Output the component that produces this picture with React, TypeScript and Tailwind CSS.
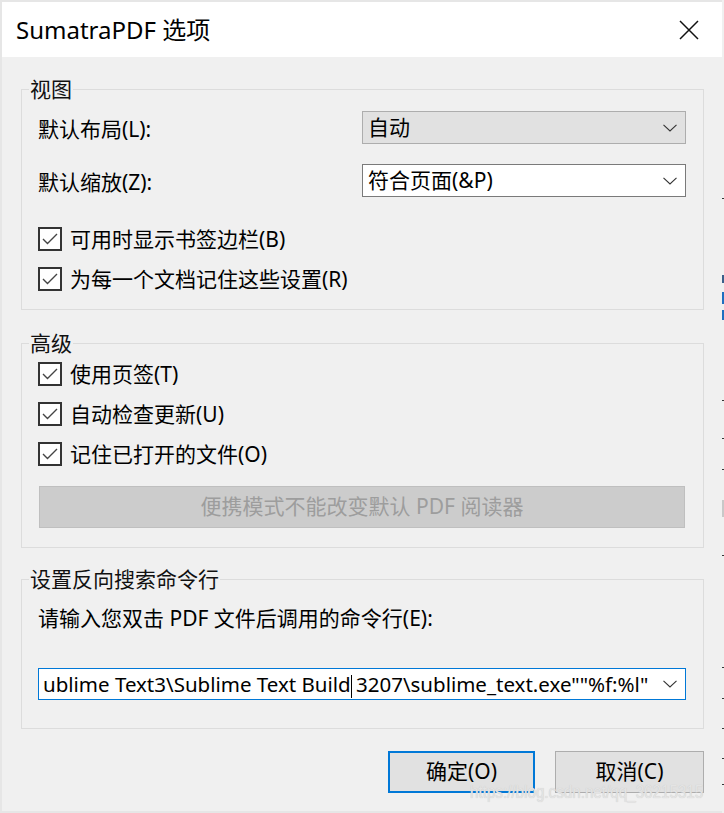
import React from "react";

const font = "font-['Noto_Sans','Noto_Sans_CJK_SC',sans-serif]";

function Chevron() {
  return (
    <svg width="14" height="8" viewBox="0 0 14 8" className="shrink-0">
      <polyline points="0.5,0.8 7,7 13.5,0.8" fill="none" stroke="#333" strokeWidth="1.1" />
    </svg>
  );
}

function Check({ label }: { label: string }) {
  return (
    <div className="flex items-center h-[24px]">
      <div className="w-[24px] h-[24px] border-2 border-[#333] bg-white flex items-center justify-center shrink-0">
        <svg width="20" height="20" viewBox="0 0 20 20">
          <polyline points="3,10 7.5,14.5 17,5" fill="none" stroke="#444" strokeWidth="1.4" />
        </svg>
      </div>
      <span className="ml-[8px] text-[21px] leading-[24px] text-black whitespace-nowrap">{label}</span>
    </div>
  );
}

function Group({ title, h, children }: { title: string; h: string; children: React.ReactNode }) {
  return (
    <fieldset className={`border border-[#dcdcdc] w-[683px] ${h} px-0 py-0 m-0`}>
      <legend className="ml-[7px] px-[1px] text-[21px] leading-[20px] text-[#111]">{title}</legend>
      <div className="pl-[16px] pr-[17px]">{children}</div>
    </fieldset>
  );
}

export default function App() {
  return (
    <div className={`${font} w-[724px] h-[813px] bg-[#e6e6e6] relative overflow-hidden`}>
      <div className="absolute left-[2px] top-[2px] w-[720px] h-[809px] flex flex-col">
        {/* title bar */}
        <div className="h-[55px] bg-white flex items-center pl-[14px] pr-[23px]">
          <span className="text-[24px] text-black flex-1">SumatraPDF 选项</span>
          <svg width="20" height="20" viewBox="0 0 20 20">
            <path d="M1 1 L19 19 M19 1 L1 19" stroke="#111" strokeWidth="1.5" />
          </svg>
        </div>

        <div className="flex-1 bg-[#f0f0f0] pl-[19px] flex flex-col">
          {/* 视图 */}
          <div className="mt-[22px]">
            <Group title="视图" h="h-[231px]">
              <div className="mt-[12px] flex items-center h-[33px]">
                <span className="flex-1 text-[21px] mt-[5px] text-black">默认布局(L):</span>
                <div className="w-[324px] h-[33px] bg-[#e1e1e1] border border-[#adadad] flex items-center pl-[5px] pr-[8px]">
                  <span className="flex-1 text-[21px] text-black">自动</span>
                  <Chevron />
                </div>
              </div>
              <div className="mt-[20px] flex items-center h-[33px]">
                <span className="flex-1 text-[21px] mt-[5px] text-black">默认缩放(Z):</span>
                <div className="w-[324px] h-[33px] bg-white border border-[#7a7a7a] flex items-center pl-[5px] pr-[8px]">
                  <span className="flex-1 text-[21px] text-black">符合页面(&amp;P)</span>
                  <Chevron />
                </div>
              </div>
              <div className="mt-[30px] flex flex-col gap-[16px]">
                <Check label="可用时显示书签边栏(B)" />
                <Check label="为每一个文档记住这些设置(R)" />
              </div>
            </Group>
          </div>

          {/* 高级 */}
          <div className="mt-[23px]">
            <Group title="高级" h="h-[215px]">
              <div className="mt-[9px] flex flex-col gap-[16px]">
                <Check label="使用页签(T)" />
                <Check label="自动检查更新(U)" />
                <Check label="记住已打开的文件(O)" />
              </div>
              <div className="mt-[20px] ml-px w-[646px] h-[42px] bg-[#cccccc] border border-[#bfbfbf] flex items-center justify-center text-[21px] text-[#9d9d9d]">
                便携模式不能改变默认 PDF 阅读器
              </div>
            </Group>
          </div>

          {/* 设置反向搜索命令行 */}
          <div className="mt-[21px]">
            <Group title="设置反向搜索命令行" h="h-[160px]">
              <div className="mt-[19px] text-[21px] leading-[20px] text-black">请输入您双击 PDF 文件后调用的命令行(E):</div>
              <div className="mt-[40px] w-[648px] h-[32px] bg-white border border-[#0078d7] flex items-center pl-[4px] pr-[8px]">
                <div className="flex-1 overflow-hidden whitespace-nowrap text-[20.5px] leading-[30px] text-black">
                  ublime Text3\Sublime Text Build
                  <span className="inline-block w-px h-[23px] bg-black align-middle -mr-px" />
                  {" 3207\\sublime_text.exe\"\"%f:%l\""}
                </div>
                <Chevron />
              </div>
            </Group>
          </div>

          {/* buttons */}
          <div className="mt-[22px] w-[683px] flex justify-end gap-[20px]">
            <button className="w-[147px] h-[42px] bg-[#e1e1e1] border-2 border-[#0078d7] text-[21px] text-black">确定(O)</button>
            <button className="w-[149px] h-[42px] bg-[#e1e1e1] border border-[#adadad] text-[21px] text-black">取消(C)</button>
          </div>
        </div>
      </div>

      {/* right background strip */}
      <div className="absolute left-[722px] top-0 w-[2px] h-[813px] bg-[#f0f0f0]">
        <div className="absolute top-[198px] left-0 w-[2px] h-px bg-[#333]" />
        <div className="absolute top-[275px] left-0 w-[2px] h-[8px] bg-[#3a5f8a]" />
        <div className="absolute top-[292px] left-0 w-[2px] h-[12px] bg-[#1e6fc0]" />
        <div className="absolute top-[310px] left-0 w-[2px] h-[10px] bg-[#1e6fc0]" />
        <div className="absolute top-[400px] left-0 w-[2px] h-px bg-[#333]" />
        <div className="absolute top-[438px] left-0 w-[2px] h-px bg-[#333]" />
        <div className="absolute top-[469px] left-0 w-[2px] h-px bg-[#333]" />
        <div className="absolute top-[500px] left-0 w-[2px] h-[17px] bg-[#c8c8c8]" />
        <div className="absolute top-[555px] left-0 w-[2px] h-px bg-[#333]" />
        <div className="absolute top-[667px] left-0 w-[2px] h-px bg-[#333]" />
        <div className="absolute top-[698px] left-0 w-[2px] h-px bg-[#333]" />
        <div className="absolute top-[728px] left-0 w-[2px] h-px bg-[#333]" />
        <div className="absolute top-[758px] left-0 w-[2px] h-px bg-[#333]" />
        <div className="absolute top-[784px] left-0 w-[2px] h-px bg-[#333]" />
      </div>

      {/* watermark */}
      <div className="absolute left-[470px] top-[781px] origin-left scale-x-[0.8] whitespace-nowrap text-[19px] leading-[22px] text-[#e4e4e4] font-['Liberation_Sans',sans-serif] [text-shadow:0_0_1px_#c4c4c4]">
        https://blog.csdn.net/qq_36215315
      </div>
    </div>
  );
}
